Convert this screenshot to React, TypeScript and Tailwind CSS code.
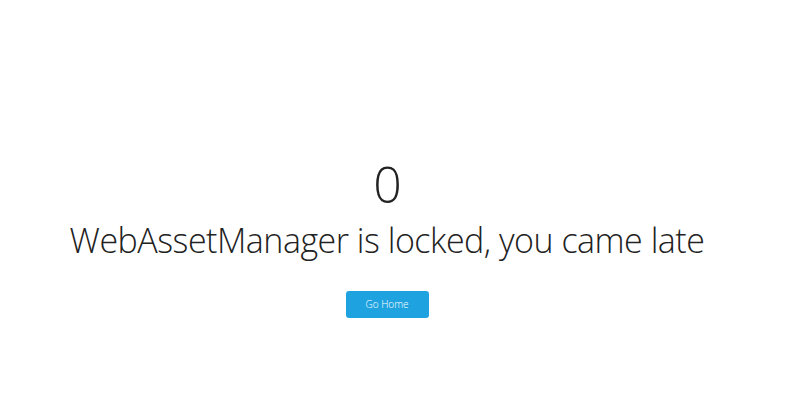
import React from "react";

export default function App() {
  return (
    <div className="h-[409px] w-[800px] bg-white font-['Open_Sans',sans-serif] text-[#222]">
      <div className="flex w-[774px] flex-col items-center pt-[154px]">
        <h1 className="text-[50px] font-light leading-[60px] tracking-[-1px]">0</h1>
        <h2 className="mt-[4px] text-[34px] font-light leading-[44px] tracking-[-0.5px]">
          WebAssetManager is locked, you came late
        </h2>
        <button className="mt-[29px] h-[27px] w-[83px] rounded-[3px] bg-[#1fa3e0] text-[10px] font-light text-white">
          Go Home
        </button>
      </div>
    </div>
  );
}
